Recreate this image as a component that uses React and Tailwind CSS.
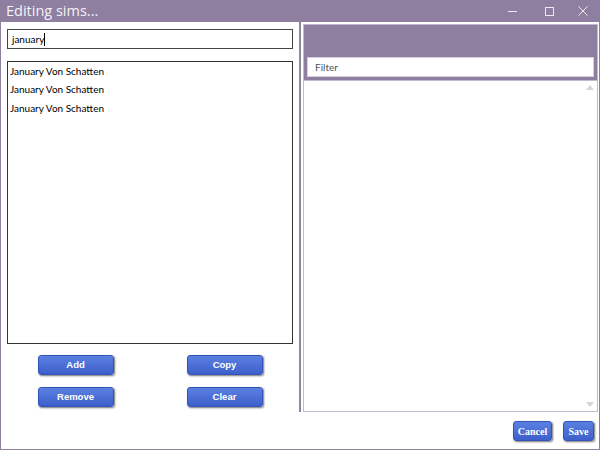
import React from "react";

const ui = { fontFamily: 'Lato, "Open Sans", sans-serif' };

function LBtn({ children }) {
  return (
    <button
      className="w-[76px] h-[20px] rounded-[3px] border border-[#3552b8] bg-gradient-to-b from-[#5b80e2] to-[#3d5fcb] text-white font-bold text-[9.5px] shadow-[1px_1px_2px_rgba(0,0,0,0.55)] flex items-center justify-center"
      style={{ fontFamily: '"Liberation Sans", Arial, sans-serif' }}
    >
      {children}
    </button>
  );
}

function FBtn({ children, w }) {
  return (
    <button
      className={`${w} h-[20px] rounded-[3px] border border-[#3552b8] bg-gradient-to-b from-[#5b80e2] to-[#3d5fcb] text-white font-bold text-[10px] shadow-[1px_1px_2px_rgba(0,0,0,0.55)] flex items-center justify-center`}
      style={{ fontFamily: '"Liberation Serif", "Times New Roman", serif' }}
    >
      {children}
    </button>
  );
}

export default function App() {
  return (
    <div className="w-[600px] h-[450px] bg-white flex flex-col border-x border-b border-[#8e7ea0]" style={ui}>
      <div className="h-[22px] bg-[#8e7ea0] flex items-center shrink-0 -mx-px">
        <span
          className="pl-[6px] text-[14.5px] text-[#f4f2f7] leading-none"
          style={{ fontFamily: '"Open Sans", "Noto Sans", sans-serif' }}
        >
          Editing sims...
        </span>
        <div className="ml-auto flex items-center h-full">
          <div className="w-[34px] h-full flex items-center justify-center pr-[6px]">
            <div className="w-[9px] h-px bg-[#eeeaf2]" />
          </div>
          <div className="w-[34px] h-full flex items-center justify-center">
            <div className="w-[9px] h-[9px] border border-[#eeeaf2]" />
          </div>
          <div className="w-[34px] h-full flex items-center justify-center">
            <svg width="10" height="10" viewBox="0 0 10 10">
              <path d="M0.5 0.5 L9.5 9.5 M9.5 0.5 L0.5 9.5" stroke="#eeeaf2" strokeWidth="1" />
            </svg>
          </div>
        </div>
      </div>
      <div className="flex-1 flex min-h-0">
        <div className="w-[298px] flex flex-col pt-[7px] px-[6px]">
          <div className="h-[20px] border border-[#444] flex items-center pl-[4px] text-[10px] text-black">
            january<span className="inline-block w-px h-[13px] bg-black" />
          </div>
          <div className="mt-[12px] h-[283px] border border-[#333]">
            {[0, 1, 2].map((i) => (
              <div key={i} className="h-[18.5px] flex items-center pl-[2px] text-[10px] text-black">
                January Von Schatten
              </div>
            ))}
          </div>
          <div className="grid grid-cols-2 gap-y-[12px] mt-[11px] -mx-[6px]">
            <div className="flex justify-center"><LBtn>Add</LBtn></div>
            <div className="flex justify-center"><LBtn>Copy</LBtn></div>
            <div className="flex justify-center"><LBtn>Remove</LBtn></div>
            <div className="flex justify-center"><LBtn>Clear</LBtn></div>
          </div>
        </div>
        <div className="w-[300px] flex flex-col">
          <div className="h-[390px] border-l-2 border-[#9283a5] pl-[2px] pt-[2px] pr-px flex">
            <div className="flex-1 border border-[#c3b8cf] flex flex-col relative">
              <div className="bg-[#8e7ea0] pt-[32px] px-[3px] pb-[3px] border-b border-[#c3b8cf]">
                <div className="h-[20px] bg-white border border-[#d8d0e0] flex items-center pl-[7px] text-[10px] text-[#555]">
                  Filter
                </div>
              </div>
              <div className="flex-1 relative">
                <svg className="absolute right-[3px] top-[4px]" width="8" height="5" viewBox="0 0 8 5">
                  <path d="M0 5 L4 0 L8 5 Z" fill="#d6d6d6" />
                </svg>
                <svg className="absolute right-[3px] bottom-[4px]" width="8" height="5" viewBox="0 0 8 5">
                  <path d="M0 0 L4 5 L8 0 Z" fill="#d6d6d6" />
                </svg>
              </div>
            </div>
          </div>
          <div className="flex-1 flex justify-end items-start pt-[9px] pr-[5px] gap-[11px]">
            <FBtn w="w-[39px]">Cancel</FBtn>
            <FBtn w="w-[31px]">Save</FBtn>
          </div>
        </div>
      </div>
    </div>
  );
}
